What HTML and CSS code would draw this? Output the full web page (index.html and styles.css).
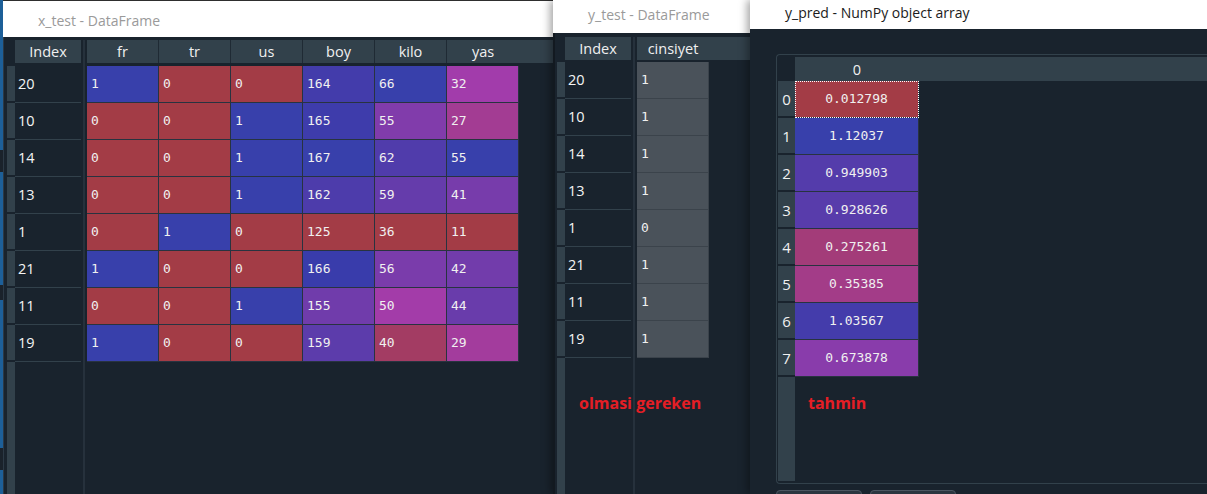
FILE: index.html
```html
<!DOCTYPE html>
<html>
<head>
<meta charset="utf-8">
<title>DataFrames</title>
<link rel="stylesheet" href="styles.css">
</head>
<body>
<div class="desk">

  <div class="win w1">
    <div class="title">x_test - DataFrame</div>
    <div class="wbody">
      <div class="vhead">
        <div class="corner"></div>
        <div class="vcell"></div><div class="vcell"></div><div class="vcell"></div><div class="vcell"></div>
        <div class="vcell"></div><div class="vcell"></div><div class="vcell"></div><div class="vcell"></div>
        <div class="vfill"></div>
      </div>
      <div class="idx">
        <div class="hcell">Index</div>
        <div class="icell">20</div><div class="icell">10</div><div class="icell">14</div><div class="icell">13</div>
        <div class="icell">1</div><div class="icell">21</div><div class="icell">11</div><div class="icell">19</div>
      </div>
      <div class="divider"></div>
      <div class="grid">
        <div class="hrow"><div class="h">fr</div><div class="h">tr</div><div class="h">us</div><div class="h">boy</div><div class="h">kilo</div><div class="h">yas</div></div>
        <div class="drow"><div class="d b">1</div><div class="d r">0</div><div class="d r">0</div><div class="d" style="background:#433cab">164</div><div class="d" style="background:#3840ab">66</div><div class="d" style="background:#a23cab">32</div></div>
        <div class="drow"><div class="d r">0</div><div class="d r">0</div><div class="d b">1</div><div class="d" style="background:#3e3cab">165</div><div class="d" style="background:#813cab">55</div><div class="d" style="background:#a33c93">27</div></div>
        <div class="drow"><div class="d r">0</div><div class="d r">0</div><div class="d b">1</div><div class="d" style="background:#3840ab">167</div><div class="d" style="background:#503cab">62</div><div class="d" style="background:#3840ab">55</div></div>
        <div class="drow"><div class="d r">0</div><div class="d r">0</div><div class="d b">1</div><div class="d" style="background:#4d3cab">162</div><div class="d" style="background:#653cab">59</div><div class="d" style="background:#773cab">41</div></div>
        <div class="drow"><div class="d r">0</div><div class="d b">1</div><div class="d r">0</div><div class="d" style="background:#a33c46">125</div><div class="d" style="background:#a33c46">36</div><div class="d" style="background:#a33c46">11</div></div>
        <div class="drow"><div class="d b">1</div><div class="d r">0</div><div class="d r">0</div><div class="d" style="background:#393cab">166</div><div class="d" style="background:#7a3cab">56</div><div class="d" style="background:#723cab">42</div></div>
        <div class="drow"><div class="d r">0</div><div class="d r">0</div><div class="d b">1</div><div class="d" style="background:#703cab">155</div><div class="d" style="background:#a33ca9">50</div><div class="d" style="background:#693cab">44</div></div>
        <div class="drow"><div class="d b">1</div><div class="d r">0</div><div class="d r">0</div><div class="d" style="background:#5c3cab">159</div><div class="d" style="background:#a33c63">40</div><div class="d" style="background:#a33c9d">29</div></div>
      </div>
    </div>
  </div>

  <div class="win w2">
    <div class="title">y_test - DataFrame</div>
    <div class="wbody">
      <div class="vhead">
        <div class="corner"></div>
        <div class="vcell"></div><div class="vcell"></div><div class="vcell"></div><div class="vcell"></div>
        <div class="vcell"></div><div class="vcell"></div><div class="vcell"></div><div class="vcell"></div>
        <div class="vfill"></div>
      </div>
      <div class="idx">
        <div class="hcell">Index</div>
        <div class="icell">20</div><div class="icell">10</div><div class="icell">14</div><div class="icell">13</div>
        <div class="icell">1</div><div class="icell">21</div><div class="icell">11</div><div class="icell">19</div>
      </div>
      <div class="divider"></div>
      <div class="grid">
        <div class="hrow"><div class="h">cinsiyet</div></div>
        <div class="drow"><div class="d g">1</div></div>
        <div class="drow"><div class="d g">1</div></div>
        <div class="drow"><div class="d g">1</div></div>
        <div class="drow"><div class="d g">1</div></div>
        <div class="drow"><div class="d g">0</div></div>
        <div class="drow"><div class="d g">1</div></div>
        <div class="drow"><div class="d g">1</div></div>
        <div class="drow"><div class="d g">1</div></div>
      </div>
    </div>
    <div class="note note-y">olmasi gereken</div>
  </div>

  <div class="win w3">
    <div class="title">y_pred - NumPy object array</div>
    <div class="wbody">
      <div class="frame">
        <div class="vhead">
          <div class="corner"></div>
          <div class="vcell">0</div><div class="vcell">1</div><div class="vcell">2</div><div class="vcell">3</div>
          <div class="vcell">4</div><div class="vcell">5</div><div class="vcell">6</div><div class="vcell">7</div>
          <div class="vfill"></div>
        </div>
        <div class="grid">
          <div class="hrow"><div class="h">0</div></div>
          <div class="drow"><div class="d focus" style="background:#a33c46">0.012798</div></div>
          <div class="drow"><div class="d" style="background:#3840ab">1.12037</div></div>
          <div class="drow"><div class="d" style="background:#543cab">0.949903</div></div>
          <div class="drow"><div class="d" style="background:#583cab">0.928626</div></div>
          <div class="drow"><div class="d" style="background:#a33c79">0.275261</div></div>
          <div class="drow"><div class="d" style="background:#a33c88">0.35385</div></div>
          <div class="drow"><div class="d" style="background:#443cab">1.03567</div></div>
          <div class="drow"><div class="d" style="background:#893cab">0.673878</div></div>
        </div>
      </div>
      <div class="btns"><div class="btn"></div><div class="btn"></div></div>
    </div>
    <div class="note note-p">tahmin</div>
  </div>

</div>
</body>
</html>
```

FILE: styles.css
```css
* { box-sizing: border-box; margin: 0; padding: 0; }
html, body { width: 1207px; height: 494px; overflow: hidden; }
body {
  background: linear-gradient(#1d5f98 0 150px, #1a222b 150px 172px, #1d5f98 172px 285px, #1a222b 285px 300px, #1d5f98 300px 448px, #1a222b 448px 470px, #1d5f98 470px);
  font-family: "Open Sans", "Noto Sans", sans-serif;
  color: #e6e6e6;
}
.desk { position: relative; width: 1207px; height: 494px; overflow: hidden; }

.win {
  position: absolute;
  top: 0;
  height: 494px;
  display: flex;
  flex-direction: column;
  background: #19232d;
  overflow: hidden;
}
.w1 { left: 3px; width: 552px; border-top: 1px solid #2e2e2e; }
.w2 { left: 553px; width: 198px; box-shadow: -3px 0 8px rgba(0, 0, 0, 0.35); }
.w3 { left: 750px; width: 470px; box-shadow: -3px 0 8px rgba(0, 0, 0, 0.35); }

.title {
  flex: none;
  background: #fff;
  font-size: 14px;
  color: #9a9a9a;
  white-space: nowrap;
  padding-left: 35px;
}
.w1 .title { height: 36px; line-height: 39px; }
.w2 .title { height: 33px; line-height: 30px; }
.w3 .title { height: 29px; line-height: 25px; color: #1b1b1b; }

.wbody { flex: 1; display: flex; min-height: 0; }
.w1 .wbody { padding: 3px 0 0 3px; border-left: 1px solid #2c3945; }
.w2 .wbody { padding: 4px 0 0 2px; border-left: 2px solid #121920; }
.w3 .wbody { padding: 25px 0 0 26px; flex-direction: column; }

.vhead { width: 8px; flex: none; display: flex; flex-direction: column; }
.w1 .corner { height: 26px; }
.w2 .corner { height: 25px; }
.vcell { height: 37px; flex: none; background: #32414b; border-bottom: 2px solid #19232d; }
.vfill { flex: 1; background: #32414b; }

.idx { width: 66px; flex: none; display: flex; flex-direction: column; }
.hcell {
  height: 23px;
  background: #32414b;
  text-align: center;
  line-height: 24px;
  font-size: 14.5px;
  color: #f0f0f0;
}
.w1 .hcell, .w1 .hrow { margin-bottom: 3px; }
.w2 .hcell, .w2 .hrow { margin-bottom: 2px; }
.icell {
  height: 37px;
  border-bottom: 1px solid #32414b;
  line-height: 36px;
  padding-left: 3px;
  font-size: 14.5px;
  color: #f4f4f4;
}

.divider { width: 2px; margin: 0 2px; background: #26313c; flex: none; }

.grid { flex: 1; min-width: 0; display: flex; flex-direction: column; }
.hrow { height: 23px; flex: none; display: flex; background: #32414b; }
.h {
  width: 72px;
  border-right: 1px solid #1f2a34;
  text-align: center;
  line-height: 24px;
  font-size: 14.5px;
  color: #f0f0f0;
}
.h:last-child { border-right: none; }
.drow { display: flex; flex: none; }
.d {
  width: 72px;
  height: 37px;
  border-right: 1px solid #283340;
  border-bottom: 1px solid #283340;
  font-family: "DejaVu Sans Mono", "Liberation Mono", monospace;
  font-size: 13px;
  line-height: 36px;
  padding-left: 4px;
  color: #f0f0f0;
}
.d.r { background: #a33c46; }
.d.b { background: #3840ab; }
.d.g { background: #4a525a; border-color: #3b434b; }

.frame {
  flex: none;
  height: 430px;
  border: 1px solid #32414b;
  border-right: none;
  border-radius: 4px 0 0 4px;
  padding: 2px 0 2px 1px;
  display: flex;
}
.w3 .vhead { width: 17px; }
.w3 .corner { height: 24px; flex: none; }
.w3 .vcell {
  display: flex;
  align-items: center;
  justify-content: center;
  font-size: 15px;
  color: #f0f0f0;
}
.w3 .hrow { height: 24px; }
.w3 .h { width: 124px; line-height: 25px; }
.w3 .d { width: 124px; text-align: center; padding-left: 0; }
.focus { outline: 1px dotted #ffffff; outline-offset: -1px; }

.btns { display: flex; gap: 8px; margin-top: 6px; }
.btn { width: 86px; height: 26px; border: 1px solid #4b5661; border-radius: 4px; background: #2b3640; }

.note {
  position: absolute;
  top: 393px;
  font-size: 16px;
  line-height: 20px;
  font-weight: 700;
  color: #e51e25;
  white-space: nowrap;
}
.note-y { left: 26px; }
.note-p { left: 58px; }
```
